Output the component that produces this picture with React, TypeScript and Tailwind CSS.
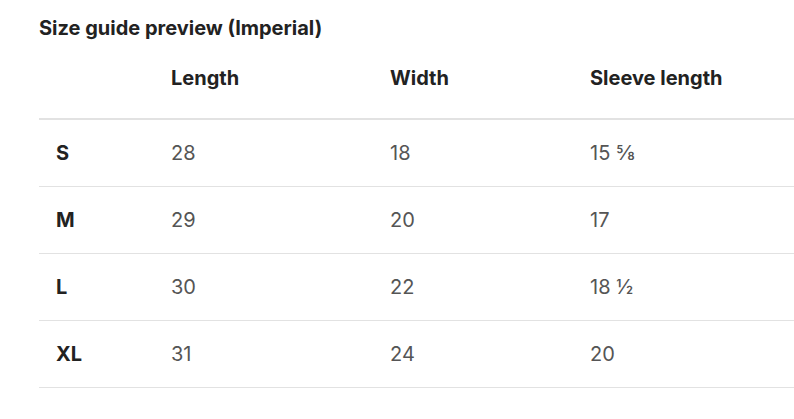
const rows = [
  { size: "S", length: "28", width: "18", sleeve: "15 ⅝" },
  { size: "M", length: "29", width: "20", sleeve: "17" },
  { size: "L", length: "30", width: "22", sleeve: "18 ½" },
  { size: "XL", length: "31", width: "24", sleeve: "20" },
];

export default function App() {
  return (
    <div className="min-h-[419px] bg-white pl-[39px] pt-[14px] font-['Inter',sans-serif] text-[#222]">
      <h2 className="h-[28px] text-[20px] leading-[28px] font-bold">
        Size guide preview (Imperial)
      </h2>
      <table className="w-[755px] border-collapse text-left">
        <thead>
          <tr className="border-b-2 border-[#e2e2e2]">
            <th className="w-[115px] h-[77px]" />
            <th className="w-[219px] pl-[17px] pb-[4px] text-[20px] font-bold">Length</th>
            <th className="w-[200px] pl-[17px] pb-[4px] text-[20px] font-bold">Width</th>
            <th className="pl-[17px] pb-[4px] text-[20px] font-bold">Sleeve length</th>
          </tr>
        </thead>
        <tbody>
          {rows.map((r) => (
            <tr key={r.size} className="h-[67px] border-b border-[#e2e2e2]">
              <td className="pl-[17px] text-[20px] font-bold">{r.size}</td>
              <td className="pl-[17px] text-[20px] text-[#555]">{r.length}</td>
              <td className="pl-[17px] text-[20px] text-[#555]">{r.width}</td>
              <td className="pl-[17px] text-[20px] text-[#555]">{r.sleeve}</td>
            </tr>
          ))}
        </tbody>
      </table>
    </div>
  );
}
